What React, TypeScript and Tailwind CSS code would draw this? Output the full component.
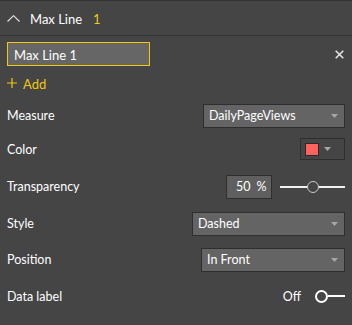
import React from 'react';

const Caret = () => (
  <svg width="7" height="4" viewBox="0 0 7 4" className="shrink-0">
    <path d="M0 0h7L3.5 4z" fill="#a6a6a6" />
  </svg>
);

const Dropdown = ({ value, width }: { value: string; width: string }) => (
  <div className={`${width} h-[24px] flex items-center justify-between pl-[5px] pr-[6px] bg-[#646464] border border-[#2e2e2e]`}>
    <span className="text-white translate-y-[1px]">{value}</span>
    <Caret />
  </div>
);

const Row = ({ label, h, children }: { label: string; h: string; children: React.ReactNode }) => (
  <div className={`${h} flex items-center justify-between`}>
    <span className="text-white translate-y-[1px]">{label}</span>
    {children}
  </div>
);

export default function App() {
  return (
    <div
      className="w-[352px] h-[325px] bg-[#454545] border-t border-[#333333] text-[12.5px] leading-none overflow-hidden"
      style={{ fontFamily: 'Lato, "Open Sans", sans-serif' }}
    >
      {/* header */}
      <div className="h-[35px] flex items-center pl-[7px] border-b border-[#333333]">
        <svg width="13" height="7" viewBox="0 0 13 7" className="mt-[1px]">
          <path d="M0.5 6.5L6.5 0.7L12.5 6.5" stroke="#e6e6e6" strokeWidth="1.1" fill="none" />
        </svg>
        <span className="ml-[10px] text-white text-[13px] translate-y-[1px]">Max Line</span>
        <span className="ml-[11px] text-[#f2c811] text-[13px] translate-y-[1px]">1</span>
      </div>

      <div className="px-[7px]">
        <div className="mt-[6px] h-[24px] flex items-center justify-between">
          <div className="w-[143px] h-[24px] flex items-center pl-[6px] bg-[#666666] border border-[#f2c811] text-white text-[13px]">
            <span className="translate-y-[1px]">Max Line 1</span>
          </div>
          <svg width="9" height="9" viewBox="0 0 9 9" className="mr-[1px]">
            <path d="M0.7 0.7L8.3 8.3M8.3 0.7L0.7 8.3" stroke="#e8e8e8" strokeWidth="1.5" />
          </svg>
        </div>

        <div className="h-[34px] flex items-center gap-[6px] text-[#f2c811] text-[13px]">
          <svg width="10" height="10" viewBox="0 0 10 10">
            <path d="M5 0v10M0 5h10" stroke="#f2c811" strokeWidth="1.2" />
          </svg>
          <span className="translate-y-[1px]">Add</span>
        </div>

        <Row label="Measure" h="h-[31px]">
          <Dropdown value="DailyPageViews" width="w-[142px]" />
        </Row>

        <Row label="Color" h="h-[36px]">
          <div className="w-[45px] h-[22px] flex items-center pl-[4px] gap-[5px] border border-[#2e2e2e]">
            <div className="w-[14px] h-[13px] bg-[#fd625e] border border-[#2a2a2a]" />
            <Caret />
          </div>
        </Row>

        <Row label="Transparency" h="h-[39px]">
          <div className="flex items-center gap-[8px]">
            <div className="w-[46px] h-[24px] flex items-center pl-[9px] bg-[#5f5f5f] border border-[#2e2e2e] text-white">
              <span className="translate-y-[1px]">50</span>
              <span className="ml-[6px] translate-y-[1px]">%</span>
            </div>
            <div className="relative w-[65px] h-[14px] flex items-center">
              <div className="w-full h-[2px] bg-[#f0f0f0]" />
              <div className="absolute left-[27px] top-[1px] w-[12px] h-[12px] rounded-full bg-[#454545] border-[1.5px] border-[#c8c8c8]" />
            </div>
          </div>
        </Row>

        <Row label="Style" h="h-[35px]">
          <Dropdown value="Dashed" width="w-[153px]" />
        </Row>

        <Row label="Position" h="h-[37px]">
          <Dropdown value="In Front" width="w-[144px]" />
        </Row>

        <Row label="Data label" h="h-[36px]">
          <div className="flex items-center">
            <span className="text-white translate-y-[1px]">Off</span>
            <div className="ml-[14px] w-[13px] h-[13px] rounded-full border-2 border-white" />
            <div className="w-[17px] h-[2px] bg-white" />
          </div>
        </Row>
      </div>
    </div>
  );
}
